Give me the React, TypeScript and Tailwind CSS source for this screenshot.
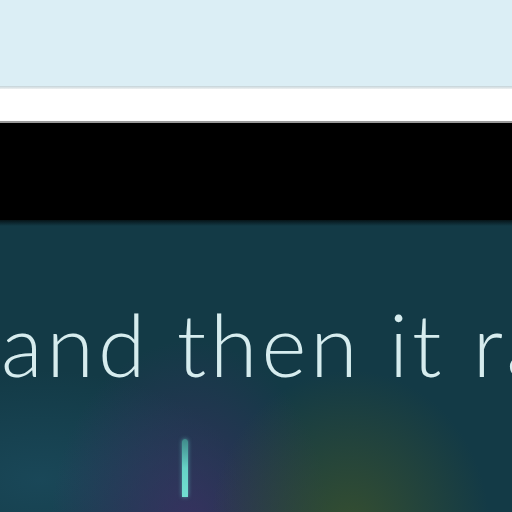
import React from "react";

export default function App() {
  return (
    <div className="w-[512px] h-[512px] overflow-hidden flex flex-col bg-black">
      {/* browser chrome */}
      <div className="h-[86px] bg-[#dbeef5] shrink-0" />
      <div className="h-[3px] bg-gradient-to-b from-[#c4d3d8] to-[#eef1f2] shrink-0" />
      <div className="h-[32px] bg-white shrink-0" />
      <div className="h-[2px] bg-[#9a9a9a] shrink-0" />
      <div className="h-[97px] bg-black shrink-0" />

      {/* video frame */}
      <div className="relative flex-1 bg-[#133a46] overflow-hidden">
        <div className="absolute inset-0 bg-[radial-gradient(ellipse_200px_110px_at_40px_260px,rgba(30,80,100,0.6),transparent)]" />
        <div className="absolute inset-0 bg-[radial-gradient(ellipse_140px_190px_at_190px_310px,rgba(70,45,105,0.7),transparent)]" />
        <div className="absolute inset-0 bg-[radial-gradient(ellipse_140px_160px_at_350px_310px,rgba(65,85,40,0.75),transparent)]" />
        <div className="absolute inset-x-0 top-0 h-[6px] bg-gradient-to-b from-[#061418] to-transparent" />
        <div className="relative pt-[81px] pl-[1px] whitespace-nowrap text-[86px] leading-none font-light text-[#d6ecee] font-['Lato','Noto_Sans',sans-serif] tracking-[4px]">
          and then it ra
        </div>
        <div className="absolute left-[182px] top-[219px] w-[6px] h-[58px] rounded-t-full rounded-b-sm bg-gradient-to-b from-[#3f8a8a] via-[#66d2c6] to-[#72e0d2] shadow-[0_0_4px_rgba(110,220,210,0.6)]" />
      </div>
    </div>
  );
}
